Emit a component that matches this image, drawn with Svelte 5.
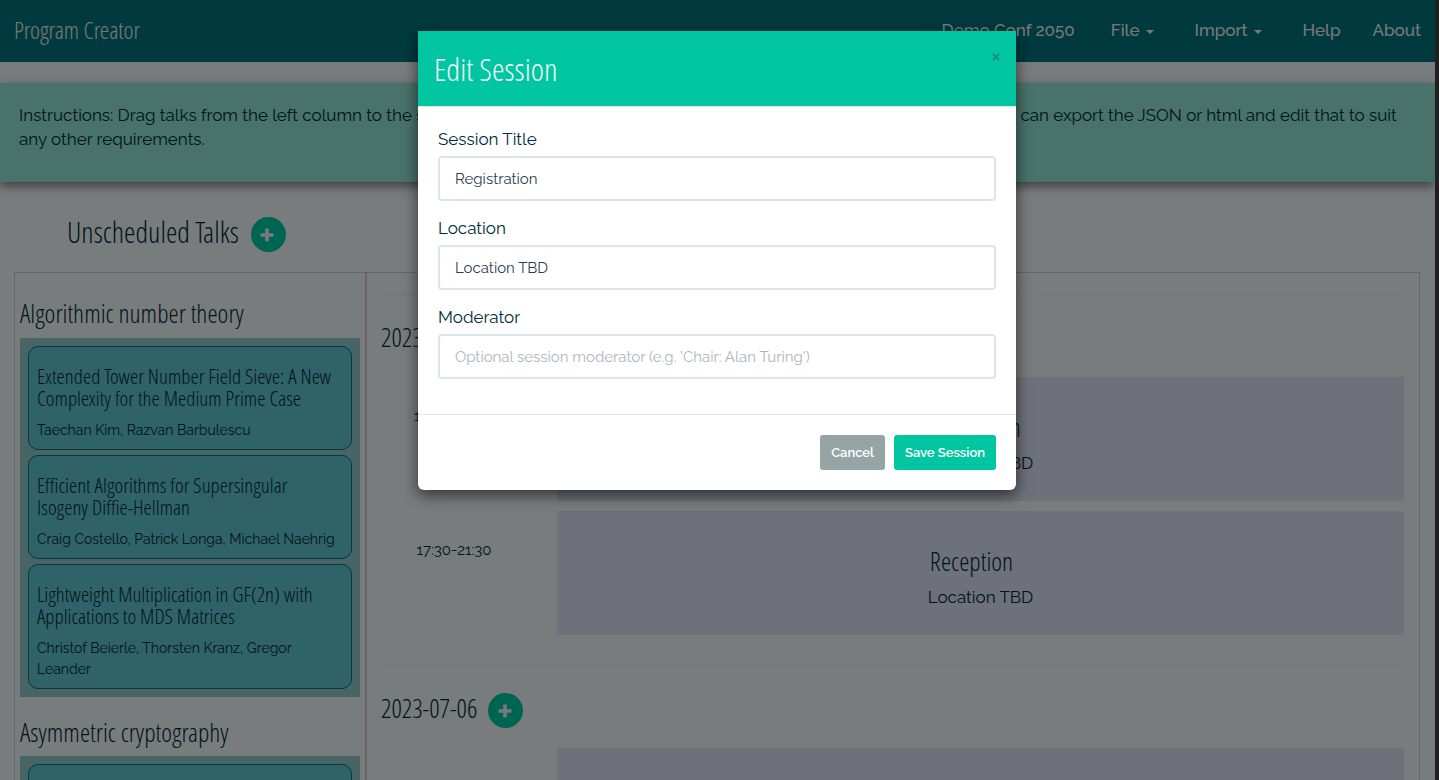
<script>
  let session = $state({ title: 'Registration', location: 'Location TBD', moderator: '' });

  const categories = [
    {
      name: 'Algorithmic number theory',
      talks: [
        { title: 'Extended Tower Number Field Sieve: A New Complexity for the Medium Prime Case', authors: 'Taechan Kim, Razvan Barbulescu' },
        { title: 'Efficient Algorithms for Supersingular Isogeny Diffie-Hellman', authors: 'Craig Costello, Patrick Longa, Michael Naehrig' },
        { title: 'Lightweight Multiplication in GF(2n) with Applications to MDS Matrices', authors: 'Christof Beierle, Thorsten Kranz, Gregor Leander' }
      ]
    },
    { name: 'Asymmetric cryptography', talks: [{ title: '', authors: '' }] }
  ];

  const days = [
    {
      date: '2023-07-05',
      slots: [
        { time: '17:00-20:00', title: 'Registration', location: 'Location TBD' },
        { time: '17:30-21:30', title: 'Reception', location: 'Location TBD' }
      ]
    },
    { date: '2023-07-06', slots: [{ time: '', title: '', location: '' }] }
  ];
</script>

{#snippet addButton(label)}
  <button class="add" aria-label={label}>
    <svg viewBox="0 0 14 14" width="14" height="14" aria-hidden="true">
      <path d="M5.2 0.5h3.6v4.7h4.7v3.6h-4.7v4.7h-3.6v-4.7h-4.7v-3.6h4.7z" fill="currentColor" />
    </svg>
  </button>
{/snippet}

<div class="window">
  <div class="page">
    <nav>
      <a class="brand" href="#home">Program Creator</a>
      <a class="conf" href="#conf">Demo Conf 2050</a>
      <a class="drop" href="#file">File <span class="caret"></span></a>
      <a class="drop" href="#import">Import <span class="caret"></span></a>
      <a href="#help">Help</a>
      <a href="#about">About</a>
    </nav>

    <p class="instructions">
      Instructions: Drag talks from the left column to the schedule on the right. Once you are all done with arranging the sessions, you
      can export the JSON or html and edit that to suit any other requirements.
    </p>

    <div class="heading">
      <h2>Unscheduled Talks</h2>
      {@render addButton('Add talk')}
    </div>

    <main>
      <section class="talks">
        {#each categories as category}
          <h3>{category.name}</h3>
          <div class="category">
            {#each category.talks as talk}
              <article>
                <h4>{talk.title}</h4>
                <p>{talk.authors}</p>
              </article>
            {/each}
          </div>
        {/each}
      </section>

      <section class="schedule">
        {#each days as day}
          <div class="day">
            <div class="date">
              <h3>{day.date}</h3>
              {@render addButton('Add session')}
            </div>
            {#each day.slots as slot}
              <div class="slot">
                <div class="time">{slot.time}</div>
                <div class="session">
                  <h3>{slot.title}</h3>
                  <p>{slot.location}</p>
                </div>
              </div>
            {/each}
          </div>
        {/each}
      </section>
    </main>
  </div>

  <div class="backdrop">
    <form class="modal" role="dialog" aria-labelledby="modal-title">
      <header>
        <h1 id="modal-title">Edit Session</h1>
        <button type="button" class="close" aria-label="Close">
          <svg viewBox="0 0 8 8" width="8" height="8" aria-hidden="true">
            <path d="M0.8 0.8L7.2 7.2M7.2 0.8L0.8 7.2" stroke="currentColor" stroke-width="2" />
          </svg>
        </button>
      </header>
      <div class="fields">
        <div class="field">
          <label for="title">Session Title</label>
          <input id="title" type="text" bind:value={session.title} />
        </div>
        <div class="field">
          <label for="location">Location</label>
          <input id="location" type="text" bind:value={session.location} />
        </div>
        <div class="field">
          <label for="moderator">Moderator</label>
          <input id="moderator" type="text" placeholder="Optional session moderator (e.g. 'Chair: Alan Turing')" bind:value={session.moderator} />
        </div>
      </div>
      <footer>
        <button type="button" class="btn cancel">Cancel</button>
        <button type="button" class="btn save">Save Session</button>
      </footer>
    </form>
  </div>
</div>

<style>
  :global(body) {
    background: #202020;
  }
  * {
    box-sizing: border-box;
  }
  h1, h2, h3, h4, p {
    margin: 0;
    font-weight: inherit;
  }
  h1, h2, h3, h4, .brand {
    font-family: 'Open Sans Condensed Light', 'Open Sans Condensed', 'Open Sans', sans-serif;
    font-weight: 300;
    line-height: 1.1;
  }
  button, input {
    font-family: inherit;
  }
  .window {
    display: grid;
    grid-template: 100vh / 1fr;
    margin-right: 4px;
    overflow: hidden;
    font-family: Raleway, sans-serif;
    font-size: 17px;
    line-height: 24px;
    color: #002c36;
  }
  .page, .backdrop {
    grid-area: 1 / 1;
    min-width: 0;
  }
  .page {
    background: #f2f9f9;
    overflow: hidden;
  }
  nav {
    display: flex;
    align-items: center;
    height: 62px;
    padding: 0 14px 2px;
    gap: 32px;
    background: #00747e;
    color: #f2f2f2;
  }
  nav a {
    color: inherit;
    text-decoration: none;
    font-weight: 500;
  }
  nav .brand {
    font-size: 24px;
    font-weight: 300;
    margin-right: auto;
  }
  nav .conf {
    margin-right: 4px;
  }
  nav .drop {
    display: flex;
    align-items: center;
    gap: 6px;
    margin-right: 9px;
  }
  .caret {
    border: 4px solid transparent;
    border-top-color: currentColor;
    border-bottom: 0;
    margin-top: 3px;
  }
  .instructions {
    margin-top: 21px;
    padding: 20px 19px 31px;
    background: #90e4d4;
    box-shadow: 0 4px 10px rgba(0, 0, 0, 0.5);
  }
  .heading {
    display: flex;
    align-items: center;
    gap: 12px;
    height: 55px;
    margin: 25px 0 10px 67px;
  }
  h2 {
    padding-bottom: 6px;
    font-size: 29px;
  }
  .add {
    display: grid;
    place-items: center;
    width: 35px;
    height: 35px;
    padding: 0 2px 0 0;
    border: 0;
    border-radius: 50%;
    background: #00c8a4;
    color: #f2f2f2;
  }
  main {
    display: grid;
    grid-template-columns: 352px 1fr;
    margin: 0 15px 0 14px;
    border: 1px solid #d4cccf;
  }
  h3 {
    font-size: 26px;
  }
  .talks {
    padding: 5px;
    border-right: 2px solid #d4cccf;
  }
  .talks h3 {
    margin: 21px 0 10px;
  }
  .category {
    display: grid;
    gap: 5px;
    padding: 8px;
    background: #90c8c8;
  }
  article {
    min-height: 104px;
    padding: 18px 8px 8px;
    border: 1px solid #00747e;
    border-radius: 10px;
    background: #60c4d2;
    font-size: 14px;
    line-height: 21px;
  }
  h4 {
    margin: 0 8px 11px 0;
    font-size: 21px;
    line-height: 22px;
  }
  .schedule {
    padding: 21px 15px 21px 14px;
  }
  .day {
    border-top: 1px solid #ebf2f2;
    margin-bottom: 30px;
  }
  .date {
    display: flex;
    align-items: center;
    gap: 11px;
    padding: 27px 0 20px;
  }
  .date h3 {
    padding-bottom: 4px;
  }
  .slot {
    display: grid;
    grid-template-columns: 146px 1fr;
    gap: 30px;
    margin-bottom: 10px;
  }
  .slot:last-child {
    margin-bottom: 0;
  }
  .time {
    padding-top: 27px;
    font-size: 15px;
    text-align: center;
  }
  .session {
    min-height: 124px;
    padding: 36px 0 26px;
    background: #dce0f4;
    text-align: center;
  }
  .session h3 {
    margin-bottom: 9px;
    padding-right: 18px;
  }
  .backdrop {
    z-index: 1;
    padding-right: 1px;
    background: rgba(0, 0, 0, 0.5);
  }
  .modal {
    width: 100%;
    max-width: 598px;
    margin: 31px auto;
    border-radius: 0 0 6px 6px;
    background: #fff;
    box-shadow: 0 5px 15px rgba(0, 0, 0, 0.6);
  }
  header {
    display: flex;
    justify-content: space-between;
    align-items: flex-start;
    padding: 20px 16px;
    border-bottom: 1px solid #e5e5e5;
    background: #02c5a2;
    background-clip: padding-box;
  }
  h1 {
    font-size: 32px;
    line-height: 35px;
    color: #f2f9f9;
  }
  .close {
    display: grid;
    padding: 2px 0;
    border: 0;
    background: none;
    color: #0a937f;
  }
  .fields {
    display: grid;
    gap: 15px;
    padding: 20px 20px 35px;
  }
  label {
    display: block;
    margin-bottom: 5px;
  }
  input {
    display: block;
    width: 100%;
    height: 45px;
    padding: 0 15px;
    border: 2px solid #dce4ec;
    border-radius: 4px;
    background: #fff;
    color: #2c3e50;
    font-size: 15px;
  }
  input::placeholder {
    color: #acb6c0;
  }
  footer {
    display: flex;
    justify-content: flex-end;
    gap: 9px;
    padding: 20px;
    border-top: 1px solid #e5e5e5;
  }
  .btn {
    height: 35px;
    padding: 0 11px;
    border: 0;
    border-radius: 3px;
    color: #fff;
    font-size: 13px;
    font-weight: 600;
  }
  .cancel {
    background: #95a5a6;
  }
  .save {
    background: #02c5a2;
  }
</style>
